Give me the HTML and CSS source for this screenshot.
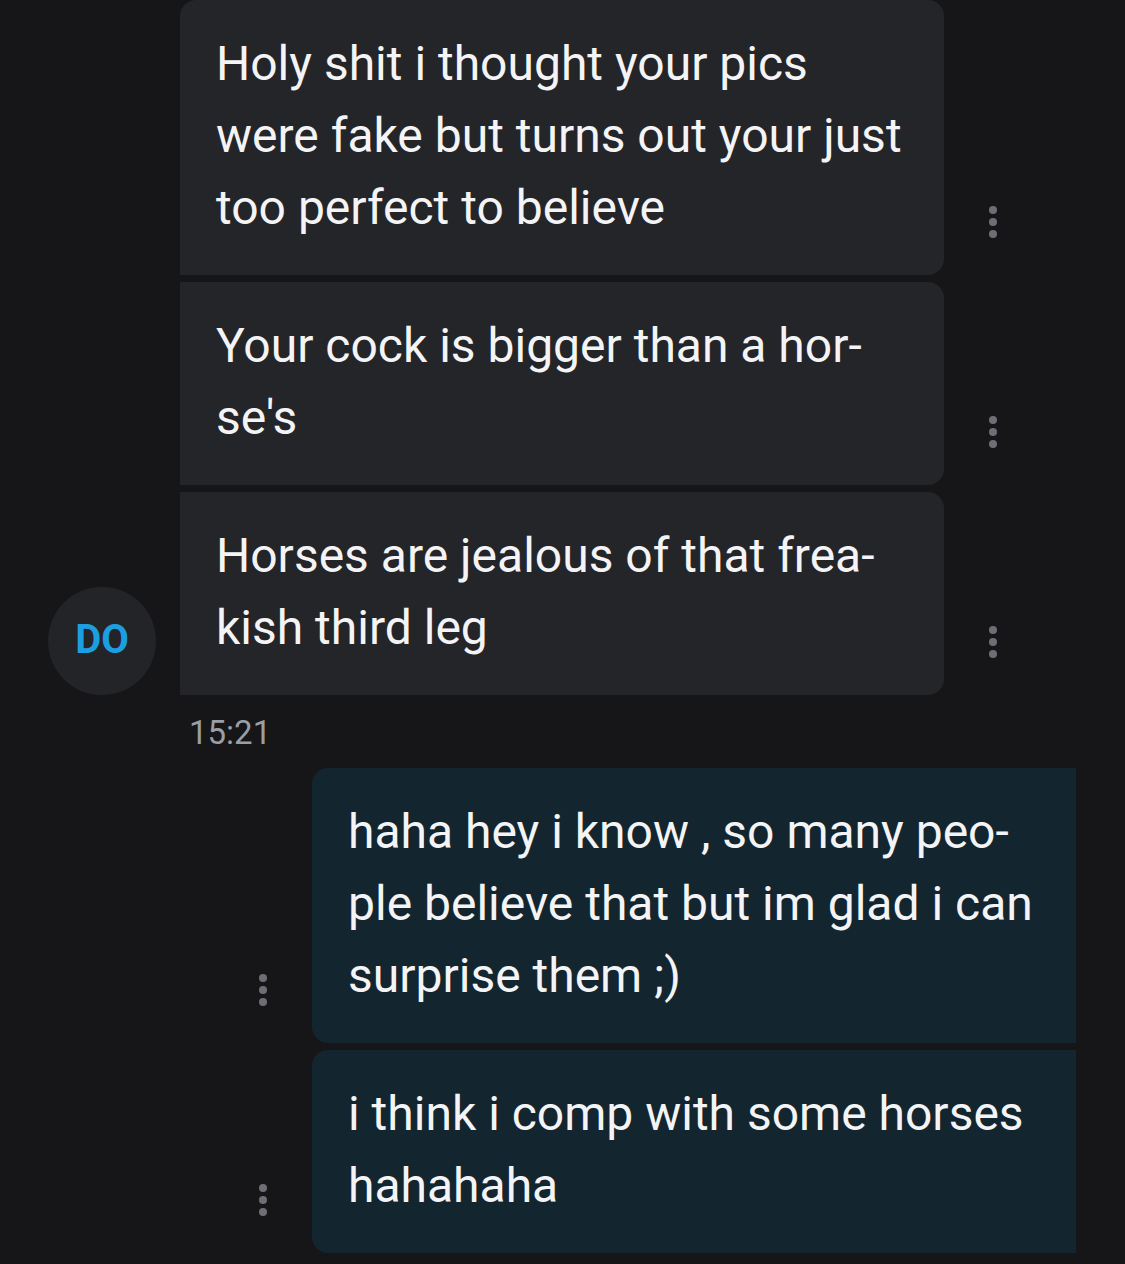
FILE: index.html
```html
<!DOCTYPE html>
<html>
<head>
<meta charset="utf-8">
<link rel="stylesheet" href="styles.css">
</head>
<body>
<div class="chat">
  <div class="group incoming">
    <div class="avatar-col"><div class="avatar">DO</div></div>
    <div class="msgs">
      <div class="row">
        <div class="bubble in first">Holy shit i thought your pics<br>were fake but turns out your just<br>too perfect to believe</div>
        <div class="menu"><span></span><span></span><span></span></div>
      </div>
      <div class="row">
        <div class="bubble in">Your cock is bigger than a hor-<br>se's</div>
        <div class="menu"><span></span><span></span><span></span></div>
      </div>
      <div class="row">
        <div class="bubble in last">Horses are jealous of that frea-<br>kish third leg</div>
        <div class="menu"><span></span><span></span><span></span></div>
      </div>
    </div>
  </div>
  <div class="time">15:21</div>
  <div class="group outgoing">
    <div class="row out">
      <div class="menu"><span></span><span></span><span></span></div>
      <div class="bubble outb">haha hey i know , so many peo-<br>ple believe that but im glad i can<br>surprise them ;)</div>
    </div>
    <div class="row out">
      <div class="menu"><span></span><span></span><span></span></div>
      <div class="bubble outb">i think i comp with some horses<br>hahahaha</div>
    </div>
  </div>
</div>
</body>
</html>
```
FILE: styles.css
```css
html, body {
  margin: 0;
  padding: 0;
  background: #161618;
}
body {
  width: 1125px;
  height: 1264px;
  overflow: hidden;
  font-family: Roboto, "Noto Sans", sans-serif;
  color: #f4f4f6;
}
.chat {
  display: flex;
  flex-direction: column;
}
.group.incoming {
  display: flex;
  align-items: flex-end;
}
.avatar-col {
  width: 180px;
  display: flex;
  justify-content: flex-start;
}
.avatar {
  width: 108px;
  height: 108px;
  margin-left: 48px;
  border-radius: 50%;
  background: #232427;
  color: #1c9fe0;
  font-weight: 700;
  font-size: 40px;
  display: flex;
  align-items: center;
  justify-content: center;
  padding-bottom: 3px;
  box-sizing: border-box;
}
.msgs {
  display: flex;
  flex-direction: column;
  gap: 7px;
}
.row {
  display: flex;
  align-items: flex-end;
}
.bubble {
  width: 764px;
  box-sizing: border-box;
  padding: 28px 20px 31px 36px;
  font-size: 48px;
  line-height: 72px;
  white-space: nowrap;
}
.bubble.in {
  background: #242529;
  border-radius: 0 16px 16px 0;
}
.bubble.in.first {
  border-top-left-radius: 16px;
}
.menu {
  width: 8px;
  display: flex;
  flex-direction: column;
  gap: 4px;
  margin-bottom: 37px;
}
.menu span {
  width: 8px;
  height: 8px;
  border-radius: 50%;
  background: #6d6f75;
}
.incoming .menu {
  margin-left: 45px;
}
.time {
  margin: 18px 0 15px 189px;
  font-size: 33px;
  line-height: 40px;
  color: #9a9ea6;
}
.group.outgoing {
  display: flex;
  flex-direction: column;
  gap: 7px;
}
.row.out {
  justify-content: flex-end;
  padding-right: 49px;
}
.out .menu {
  margin-right: 45px;
}
.bubble.outb {
  background: #13262f;
  border-radius: 16px 0 0 16px;
}
```
